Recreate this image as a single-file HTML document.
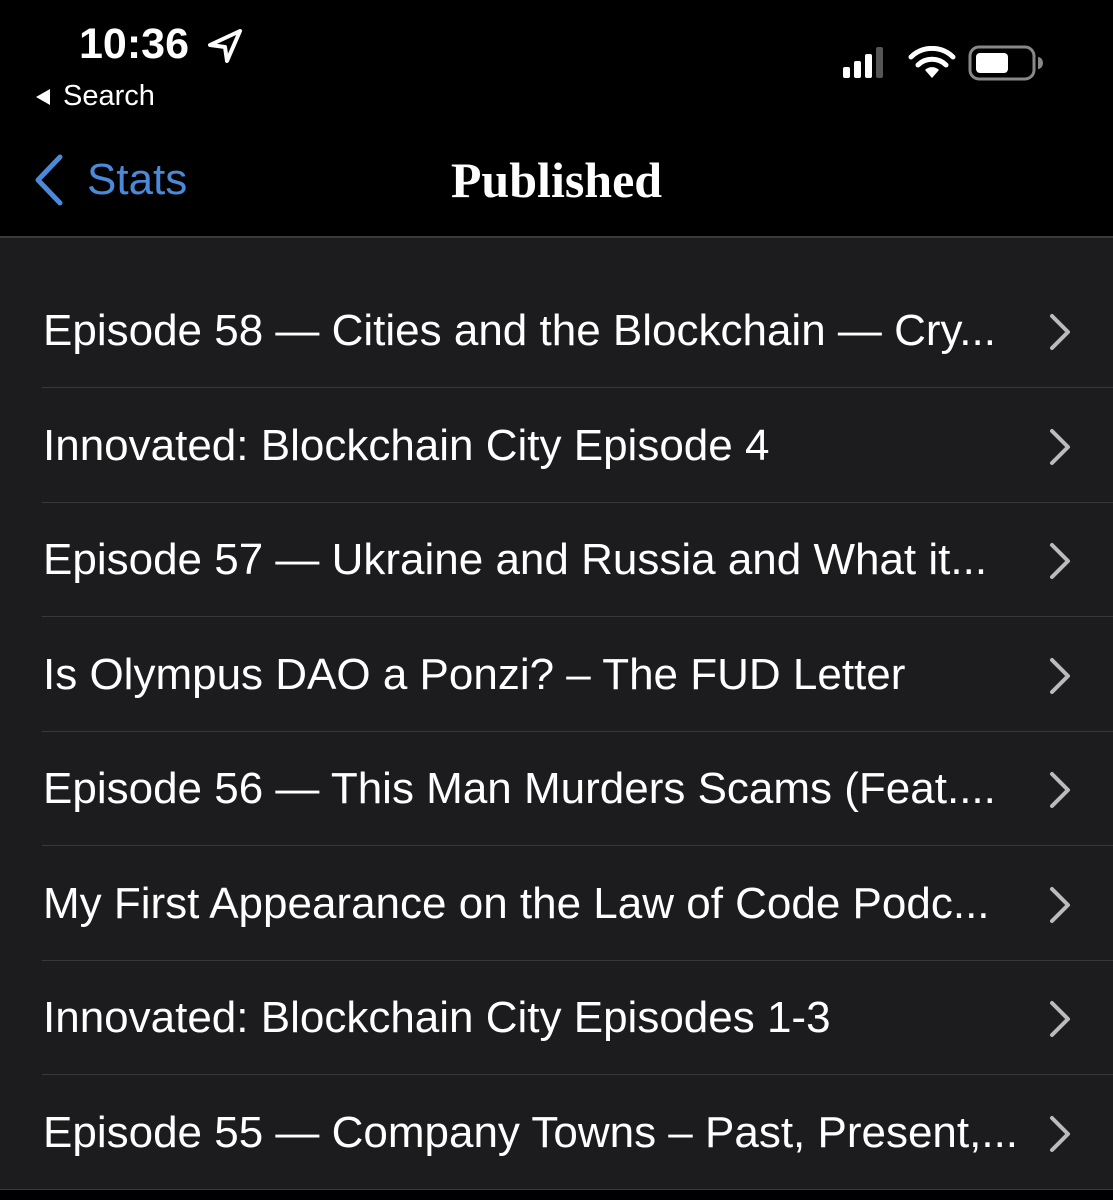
<!DOCTYPE html>
<html><head><meta charset="utf-8"><style>
html,body{margin:0;padding:0;background:#000;width:1113px;height:1200px;overflow:hidden;font-family:"Liberation Sans",sans-serif;}
.hdr{position:absolute;left:0;top:0;width:1113px;height:236px;background:#000;border-bottom:2px solid #3a3a3c;}
.list{position:absolute;left:0;top:238px;width:1113px;height:951px;background:#1c1c1e;border-bottom:1px solid #3a3a3c;}
.row{position:absolute;left:42px;right:0;height:114px;border-bottom:1px solid #38383a;}
.row span{position:absolute;left:1px;top:33px;font-size:44px;color:#fff;white-space:nowrap;letter-spacing:0px;}
.row svg{position:absolute;left:1002px;top:39px;}
.row.last{border-bottom:none;}
</style></head><body>
<div class="hdr">
<div style="position:absolute;left:79px;top:20px;color:#fff;font-size:43px;font-weight:600;">10:36</div>
<svg style="position:absolute;left:206px;top:28px" width="38" height="36" viewBox="0 0 38 36"><path d="M34 3 L4 17 L19 19 L21 33 Z" fill="none" stroke="#fff" stroke-width="4" stroke-linejoin="round"/></svg>
<svg style="position:absolute;left:34px;top:88px" width="18" height="18"><path d="M16 1 L2 9 L16 17 Z" fill="#fff"/></svg>
<div style="position:absolute;left:63px;top:80px;color:#fff;font-size:29px;">Search</div>
<svg style="position:absolute;left:842px;top:46px" width="44" height="34"><rect x="1" y="21" width="7" height="11" rx="2" fill="#fff"/><rect x="12" y="15" width="7" height="17" rx="2" fill="#fff"/><rect x="23" y="8" width="7" height="24" rx="2" fill="#fff"/><rect x="34" y="1" width="7" height="31" rx="2" fill="#555"/></svg>
<svg style="position:absolute;left:908px;top:46px" width="48" height="34" viewBox="0 0 48 34"><path d="M24 32 L17 24 A10 10 0 0 1 31 24 Z" fill="#fff"/><path d="M10 19 A20 20 0 0 1 38 19" fill="none" stroke="#fff" stroke-width="5" stroke-linecap="round"/><path d="M3 11 A30 30 0 0 1 45 11" fill="none" stroke="#fff" stroke-width="5" stroke-linecap="round"/></svg>
<svg style="position:absolute;left:968px;top:45px" width="76" height="36"><rect x="2" y="2" width="64" height="32" rx="9" fill="none" stroke="#888" stroke-width="3"/><rect x="8" y="8" width="32" height="20" rx="4" fill="#fff"/><path d="M70 12 a5 6 0 0 1 0 12 Z" fill="#888"/></svg>
<svg style="position:absolute;left:32px;top:154px" width="34" height="52"><path d="M28 3 L6 26 L28 49" fill="none" stroke="#4a8ad8" stroke-width="5" stroke-linecap="round" stroke-linejoin="round"/></svg>
<div style="position:absolute;left:87px;top:155px;color:#4a8ad8;font-size:44px;">Stats</div>
<div style="position:absolute;left:0;width:1113px;top:151px;text-align:center;color:#fff;font-size:50px;font-weight:bold;font-family:'Liberation Serif',serif;">Published</div>
</div>
<div class="list">
<div class="row" style="top:35px"><span>Episode 58 — Cities and the Blockchain — Cry...</span><svg width="30" height="40"><path d="M8 4 L24 20 L8 36" fill="none" stroke="#bbb" stroke-width="4" stroke-linecap="round" stroke-linejoin="round"/></svg></div>
<div class="row" style="top:150px"><span>Innovated: Blockchain City Episode 4</span><svg width="30" height="40"><path d="M8 4 L24 20 L8 36" fill="none" stroke="#bbb" stroke-width="4" stroke-linecap="round" stroke-linejoin="round"/></svg></div>
<div class="row" style="top:264px"><span>Episode 57 — Ukraine and Russia and What it...</span><svg width="30" height="40"><path d="M8 4 L24 20 L8 36" fill="none" stroke="#bbb" stroke-width="4" stroke-linecap="round" stroke-linejoin="round"/></svg></div>
<div class="row" style="top:379px"><span>Is Olympus DAO a Ponzi? – The FUD Letter</span><svg width="30" height="40"><path d="M8 4 L24 20 L8 36" fill="none" stroke="#bbb" stroke-width="4" stroke-linecap="round" stroke-linejoin="round"/></svg></div>
<div class="row" style="top:493px"><span>Episode 56 — This Man Murders Scams (Feat....</span><svg width="30" height="40"><path d="M8 4 L24 20 L8 36" fill="none" stroke="#bbb" stroke-width="4" stroke-linecap="round" stroke-linejoin="round"/></svg></div>
<div class="row" style="top:608px"><span>My First Appearance on the Law of Code Podc...</span><svg width="30" height="40"><path d="M8 4 L24 20 L8 36" fill="none" stroke="#bbb" stroke-width="4" stroke-linecap="round" stroke-linejoin="round"/></svg></div>
<div class="row" style="top:722px"><span>Innovated: Blockchain City Episodes 1-3</span><svg width="30" height="40"><path d="M8 4 L24 20 L8 36" fill="none" stroke="#bbb" stroke-width="4" stroke-linecap="round" stroke-linejoin="round"/></svg></div>
<div class="row last" style="top:837px"><span>Episode 55 — Company Towns – Past, Present,...</span><svg width="30" height="40"><path d="M8 4 L24 20 L8 36" fill="none" stroke="#bbb" stroke-width="4" stroke-linecap="round" stroke-linejoin="round"/></svg></div>
</div>
</body></html>
